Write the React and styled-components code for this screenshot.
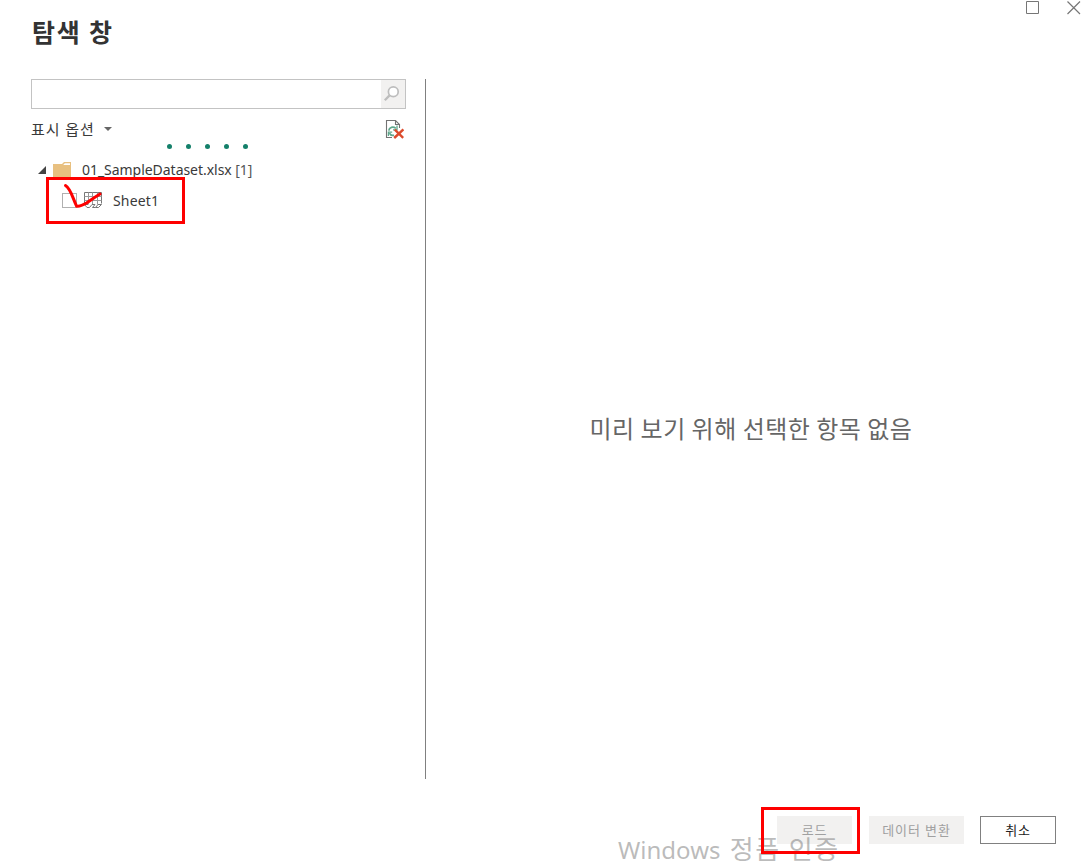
import React from 'react'
import styled, { createGlobalStyle } from 'styled-components'

const GlobalStyle = createGlobalStyle`
  * {
    box-sizing:border-box;
  }

  body {
    margin:0;
    background:#fff;
    overflow:hidden;
  }

  button, input {
    font-family:inherit;
  }
`

const SearchIcon = () => (
  <svg width='18' height='18' viewBox='0 0 18 18' fill='none' stroke='#bdbdbd'>
    <circle cx='10.3' cy='6.7' r='4.9' fill='#fff' strokeWidth='1.7' />
    <path d='M6.6 10.4 L1.8 15.2' strokeWidth='2.3' />
  </svg>
)

const RefreshIcon = () => (
  <svg width='19' height='20' viewBox='0 0 19 20' fill='none'>
    <path d='M7 18.5 H1.5 V1.5 H10.5 L14.5 5.5 V9' stroke='#737373' strokeWidth='1.1' />
    <path d='M10.5 1.5 V5.5 H14.5' stroke='#737373' strokeWidth='1.1' />
    <path d='M3.8 11.6 C4.2 8.2 8.2 7.2 10.8 9.4' stroke='#5fa78c' strokeWidth='1.8' />
    <path d='M12 6.6 V10.8 H8' stroke='#5fa78c' strokeWidth='1.3' />
    <path d='M9 16.2 C7 16.8 5.2 15.8 4.4 14.2' stroke='#5fa78c' strokeWidth='1.8' />
    <path d='M3.4 17 V13.2 H7.2' stroke='#5fa78c' strokeWidth='1.3' />
    <path d='M9.8 10.6 L18.2 18.8 M18.4 10.4 L9.2 19' stroke='#dc4b2c' strokeWidth='2.4' />
  </svg>
)

const FolderIcon = () => (
  <svg width='19' height='16' viewBox='0 0 19 16'>
    <path d='M0 2 H9 L11 0 H18 V16 H0 Z' fill='#e8c080' />
    <path d='M10.2 3 L11.8 1.2 H17 V3 Z' fill='#fff' />
  </svg>
)

const SheetIcon = () => (
  <svg width='19' height='17' viewBox='0 0 19 17' fill='none' stroke='#777'>
    <path d='M1.5 12.5 V0.5 H18.5 V11.5' />
    <path d='M1.5 4.5 H18.5 M1.5 8.5 H18.5 M5.5 0.5 V12.5 M9.5 0.5 V12.5 M14.5 0.5 V12.5' stroke='#9a9a9a' />
    <path d='M0.5 12.5 H5 M1.5 12.5 L4 15.5 H6.5 L9 12.5 H12 L9.5 15.5 H12.5 L15 12.5 H18.5 L15.5 15.5 H12.5' />
  </svg>
)

const App = () => {
  return (
    <Wrapper>
      <GlobalStyle />
      <Header>
        <Title>탐색 창</Title>
        <WindowControls>
          <svg width='14' height='14' viewBox='0 0 14 14' fill='none' stroke='#767676'>
            <path d='M0.5 0.5 H12.5 V12.5 H0.5 Z' />
          </svg>
          <svg width='14' height='14' viewBox='0 0 14 14' fill='none' stroke='#767676' strokeWidth='1.2'>
            <path d='M0.5 0.5 L13 13 M13 0.5 L0.5 13' />
          </svg>
        </WindowControls>
      </Header>
      <Content>
        <Sidebar>
          <SearchBox>
            <SearchInput type='text' />
            <SearchButton>
              <SearchIcon />
            </SearchButton>
          </SearchBox>
          <Options>
            <OptionsLabel>표시 옵션</OptionsLabel>
            <Caret />
            <RefreshIcon />
          </Options>
          <Progress>
            <Dot />
            <Dot />
            <Dot />
            <Dot />
            <Dot />
          </Progress>
          <FileRow>
            <Expander />
            <FolderIcon />
            <FileName>
              01_SampleDataset.xlsx <Count>[1]</Count>
            </FileName>
          </FileRow>
          <SheetRow>
            <Checkbox />
            <SheetIcon />
            <SheetName>Sheet1</SheetName>
            <Highlight $left={15} $top={-8} $width={139} $height={47} />
            <CheckMark width='42' height='30' viewBox='0 0 42 30'>
              <path d='M3.5 3.5 C8.5 6.5 10 14 14.5 24 C17 25 21 23 24.5 21 C29 18 33 15 38 12' />
            </CheckMark>
          </SheetRow>
        </Sidebar>
        <Preview>미리 보기 위해 선택한 항목 없음</Preview>
      </Content>
      <Footer>
        <LoadSlot>
          <Button $width={75} disabled>로드</Button>
          <Highlight $left={-16} $top={-9} $width={99} $height={47} />
        </LoadSlot>
        <Button $width={95} disabled>데이터 변환</Button>
        <Button $width={76}>취소</Button>
      </Footer>
      <Watermark>
        Windows <WatermarkKorean>정품 인증</WatermarkKorean>
      </Watermark>
    </Wrapper>
  )
}

const Wrapper = styled.main`
  position:relative;
  display:flex;
  flex-direction:column;
  width:1085px;
  height:864px;
  overflow:hidden;
  background:#fff;
  color:#3a3a3a;
  font-family:'Noto Sans', 'Noto Sans CJK KR', sans-serif;
`

const Header = styled.header`
  display:flex;
  justify-content:space-between;
  height:79px;
  padding:0 4px 0 32px;
`

const Title = styled.h1`
  margin:13px 0 0;
  color:#333;
  font-family:'Noto Sans CJK KR', sans-serif;
  font-size:25px;
  font-weight:700;
  line-height:36px;
  letter-spacing:1.8px;
`

const WindowControls = styled.div`
  display:flex;
  gap:27px;
  padding-top:1px;
`

const Content = styled.div`
  display:flex;
  height:700px;
  padding:0 10px 0 31px;
`

const Sidebar = styled.section`
  width:395px;
  padding-right:19px;
  border-right:1px solid #808080;
`

const SearchBox = styled.div`
  display:flex;
  height:30px;
  border:1px solid #c3c3c3;
`

const SearchInput = styled.input`
  flex:1;
  min-width:0;
  border:0;
  padding:0 6px;
  background:#fff;
  outline:none;
`

const SearchButton = styled.button`
  display:flex;
  align-items:center;
  width:24px;
  padding:0 0 0 2px;
  border:0;
  background:#f2f1f0;
`

const Options = styled.div`
  display:flex;
  align-items:center;
  height:40px;

  svg {
    margin:0 2px 0 auto;
  }
`

const OptionsLabel = styled.span`
  font-size:15px;
  line-height:20px;
  letter-spacing:0.9px;
`

const Caret = styled.span`
  margin-left:9px;
  border:4px solid transparent;
  border-top-color:#666;
  border-bottom:0;
`

const Progress = styled.div`
  display:flex;
  gap:14px;
  height:5px;
  margin-top:-5px;
  padding-left:136px;
`

const Dot = styled.span`
  width:5px;
  height:5px;
  border-radius:50%;
  background:#14806a;
`

const FileRow = styled.div`
  display:flex;
  align-items:center;
  height:31px;
  margin-top:5px;
  padding-left:7px;
`

const Expander = styled.span`
  width:0;
  margin-right:7px;
  border-left:8px solid transparent;
  border-bottom:8px solid #444;
`

const FileName = styled.span`
  margin-left:10px;
  font-size:14px;
  line-height:20px;
  letter-spacing:-0.04px;
  white-space:nowrap;
`

const Count = styled.span`
  color:#555;
`

const SheetRow = styled.div`
  position:relative;
  display:flex;
  align-items:center;
  height:31px;
  padding-left:31px;
`

const Checkbox = styled.span`
  width:15px;
  height:15px;
  margin-right:6px;
  border:1px solid #b0b0b0;
`

const SheetName = styled.span`
  margin-left:11px;
  font-size:14px;
  line-height:20px;
  letter-spacing:0.15px;
`

const Highlight = styled.span`
  position:absolute;
  left:${({ $left }) => $left}px;
  top:${({ $top }) => $top}px;
  z-index:2;
  width:${({ $width }) => $width}px;
  height:${({ $height }) => $height}px;
  border:3px solid #fe0000;
`

const CheckMark = styled.svg`
  position:absolute;
  left:31px;
  top:-3px;
  fill:none;
  stroke:#fe0000;
  stroke-width:3;
  stroke-linecap:round;
`

const Preview = styled.section`
  display:flex;
  flex:1;
  align-items:center;
  justify-content:center;
  padding:0 0 4px 1px;
  color:#666;
  font-family:'Noto Sans CJK KR', sans-serif;
  font-size:24px;
  letter-spacing:0.5px;
`

const Footer = styled.footer`
  display:flex;
  justify-content:flex-end;
  gap:16px;
  padding:37px 29px 0 0;
`

const LoadSlot = styled.div`
  position:relative;
  margin-right:1px;
`

const Button = styled.button`
  display:block;
  width:${({ $width }) => $width}px;
  height:28px;
  padding:0;
  border:1px solid #808080;
  background:#fff;
  color:#222;
  font-size:13px;
  line-height:20px;
  letter-spacing:0.9px;

  &:disabled {
    border-color:#f2f1f0;
    background:#f2f1f0;
    color:#a0a0a0;
  }
`

const Watermark = styled.div`
  position:absolute;
  left:618px;
  top:835px;
  color:rgba(120, 120, 120, 0.5);
  font-size:24px;
  line-height:29px;
  white-space:nowrap;
`

const WatermarkKorean = styled.span`
  margin-left:3px;
  font-size:26px;
  letter-spacing:1.5px;
`

export default App
